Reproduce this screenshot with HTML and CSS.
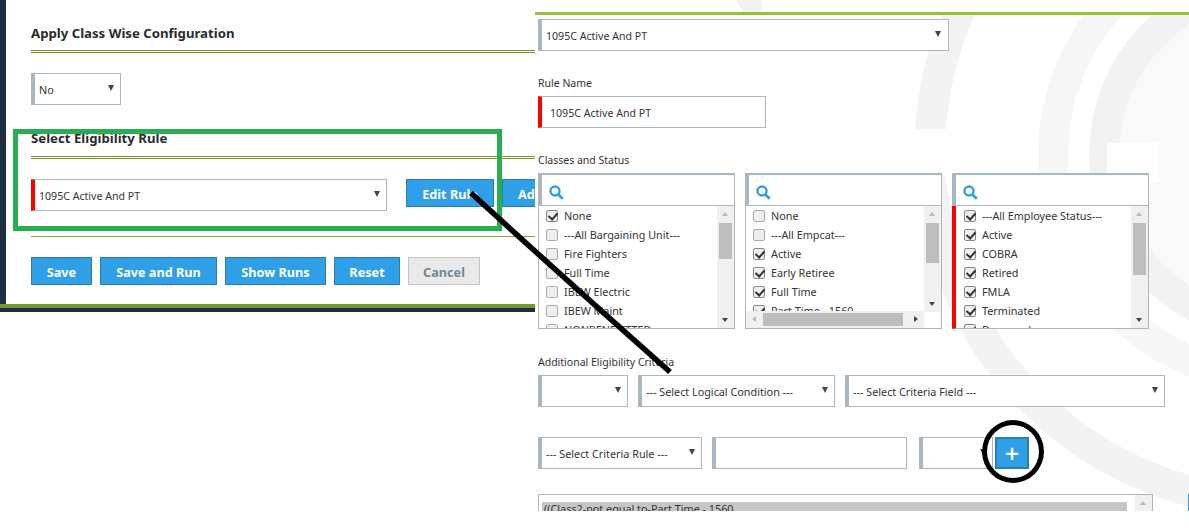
FILE: index.html
```html
<!DOCTYPE html>
<html lang="en">
<head>
<meta charset="utf-8">
<title>Eligibility Rule</title>
<link rel="stylesheet" href="styles.css">
</head>
<body>
<main class="page">
  <section class="left">
    <div class="left-inner">
      <h2 class="heading first">Apply Class Wise Configuration</h2>
      <div class="dbl-line"></div>
      <div class="sel sel-no"><span>No</span><i class="arrow"></i></div>
      <h2 class="heading second">Select Eligibility Rule</h2>
      <div class="dbl-line low"></div>
      <div class="rule-row">
        <div class="sel sel-rule req"><span>1095C Active And PT</span><i class="arrow"></i></div>
        <button class="btn edit">Edit Rule</button>
        <button class="btn add">Add</button>
      </div>
      <div class="single-line"></div>
      <div class="actions">
        <button class="btn save">Save</button>
        <button class="btn run">Save and Run</button>
        <button class="btn show">Show Runs</button>
        <button class="btn reset">Reset</button>
        <button class="btn cancel">Cancel</button>
      </div>
    </div>
    <div class="olive-bar"></div>
  </section>
  <section class="right">
    <svg class="arcs" width="654" height="511" viewBox="535 0 654 511" aria-hidden="true">
      <circle cx="1276" cy="155" r="157" fill="#f9f9f9"/>
      <g fill="none">
        <circle cx="1281" cy="152" r="351" stroke="#f3f3f3" stroke-width="31"/>
        <circle cx="1276" cy="155" r="223" stroke="#f6f6f6" stroke-width="30"/>
        <circle cx="1276" cy="155" r="172" stroke="#f2f2f2" stroke-width="30"/>
      </g>
      <rect class="cut" x="900" y="129" width="60" height="46"/>
      <rect class="cut" x="1107" y="143" width="52" height="40"/>
      <rect class="cut" x="535" y="0" width="654" height="12"/>
      <polygon points="736,0 743,12 761,12 762,0" fill="#f2f2f2"/>
    </svg>
    <div class="right-inner">
      <div class="sel sel-top"><span>1095C Active And PT</span><i class="arrow"></i></div>
      <label class="lbl rule-lbl">Rule Name</label>
      <div class="input name req"><span>1095C Active And PT</span></div>
      <label class="lbl class-lbl">Classes and Status</label>
      <div class="lists">
        <div class="listbox">
          <div class="search"><svg width="15" height="15" viewBox="0 0 15 15"><circle cx="6" cy="6" r="4.5" fill="none" stroke="#2f9fe6" stroke-width="2.4"/><path d="M9.4 9.4l4.4 4.4" stroke="#2f9fe6" stroke-width="2.8"/></svg></div>
          <div class="items">
            <ul class="opts">
              <li><b class="cb on"></b>None</li>
              <li><b class="cb"></b>---All Bargaining Unit---</li>
              <li><b class="cb"></b>Fire Fighters</li>
              <li><b class="cb"></b>Full Time</li>
              <li><b class="cb"></b>IBEW Electric</li>
              <li><b class="cb"></b>IBEW Maint</li>
              <li><b class="cb"></b>NONBENEFITTED</li>
            </ul>
            <div class="vbar"><i class="up"></i><i class="thumb t1"></i><i class="down"></i></div>
          </div>
        </div>
        <div class="listbox">
          <div class="search"><svg width="15" height="15" viewBox="0 0 15 15"><circle cx="6" cy="6" r="4.5" fill="none" stroke="#2f9fe6" stroke-width="2.4"/><path d="M9.4 9.4l4.4 4.4" stroke="#2f9fe6" stroke-width="2.8"/></svg></div>
          <div class="items with-h">
            <ul class="opts">
              <li><b class="cb"></b>None</li>
              <li><b class="cb"></b>---All Empcat---</li>
              <li><b class="cb on"></b>Active</li>
              <li><b class="cb on"></b>Early Retiree</li>
              <li><b class="cb on"></b>Full Time</li>
              <li><b class="cb on"></b>Part Time - 1560</li>
            </ul>
            <div class="vbar short"><i class="up"></i><i class="thumb t2"></i><i class="down"></i></div>
            <div class="hbar"><i class="left-a"></i><i class="hthumb"></i><i class="right-a"></i></div>
          </div>
        </div>
        <div class="listbox red">
          <div class="search"><svg width="15" height="15" viewBox="0 0 15 15"><circle cx="6" cy="6" r="4.5" fill="none" stroke="#2f9fe6" stroke-width="2.4"/><path d="M9.4 9.4l4.4 4.4" stroke="#2f9fe6" stroke-width="2.8"/></svg></div>
          <div class="items">
            <ul class="opts">
              <li><b class="cb on"></b>---All Employee Status---</li>
              <li><b class="cb on"></b>Active</li>
              <li><b class="cb on"></b>COBRA</li>
              <li><b class="cb on"></b>Retired</li>
              <li><b class="cb on"></b>FMLA</li>
              <li><b class="cb on"></b>Terminated</li>
              <li><b class="cb on"></b>Deceased</li>
            </ul>
            <div class="vbar"><i class="up"></i><i class="thumb t3"></i><i class="down"></i></div>
          </div>
        </div>
      </div>
      <label class="lbl add-lbl">Additional Eligibility Criteria</label>
      <div class="crit-row one">
        <div class="sel c1"><span></span><i class="arrow"></i></div>
        <div class="sel c2"><span>--- Select Logical Condition ---</span><i class="arrow"></i></div>
        <div class="sel c3"><span>--- Select Criteria Field ---</span><i class="arrow"></i></div>
      </div>
      <div class="crit-row two">
        <div class="sel c4"><span>--- Select Criteria Rule ---</span><i class="arrow"></i></div>
        <div class="input c5"></div>
        <div class="sel c6"><i class="arrow"></i></div>
        <button class="btn plus">+</button>
      </div>
      <div class="expr">
        <div class="expr-line">((Class2-not equal to-Part Time - 1560</div>
        <div class="expr-bar"><i class="up"></i></div>
      </div>
    </div>
    <div class="edge"></div>
  </section>
  <div class="green-box"></div>
  <svg class="pointer" width="230" height="200" viewBox="0 0 230 200" aria-hidden="true"><path d="M2 2 C60 55 130 118 201 181" fill="none" stroke="#000" stroke-width="5.5"/></svg>
  <div class="ring"></div>
</main>
</body>
</html>
```
FILE: styles.css
```css
* { box-sizing: border-box; }
html, body { margin: 0; padding: 0; background: #fff; }
body { font-family: "Noto Sans", sans-serif; color: #333; }
.page { position: relative; display: flex; align-items: flex-start; width: 1189px; height: 511px; overflow: hidden; }

.left { width: 535px; height: 312px; border-bottom: 4px solid #1c2e40; }
.left-inner { height: 304px; padding-left: 25px; border-left: 6px solid #1c2e40; }
.olive-bar { height: 4px; background: #76962e; }
.heading { margin: 0; font: bold 13.2px/16px "Noto Sans", sans-serif; color: #2b2b2b; }
.heading.first { padding-top: 25px; }
.heading.second { padding-top: 25px; }
.dbl-line { height: 3px; margin-top: 9px; border-top: 1px solid #7a9a22; border-bottom: 1px solid #7a9a22; }
.dbl-line.low { margin-top: 10px; }
.single-line { height: 1px; margin-top: 25px; background: #86a32c; }

.sel, .input { position: relative; display: flex; align-items: center; height: 32px; background: #fff; border: 1px solid #a9b8c0; border-left: 4px solid #a9b8c0; color: #333; padding: 2px 0 0 4px; }
.sel span, .input span { font: 10.8px/14px "Noto Sans", sans-serif; white-space: nowrap; }
.sel-top span, .sel-rule span, .name span { font-size: 10.6px; }
.arrow { position: absolute; right: 6px; top: 11px; width: 0; height: 0; border-left: 3.5px solid transparent; border-right: 3.5px solid transparent; border-top: 6px solid #444; }
.req { border-left-color: #f00; }
.sel-no { width: 90px; margin-top: 20px; }
.rule-row { display: flex; margin-top: 20px; width: 504px; overflow: hidden; }
.sel-rule { width: 356px; flex: none; }
.btn { flex: none; height: 28px; padding: 2px 0 0; background: #2fa0e8; border: 1px solid #2d7ea8; color: #fff; font: bold 12.7px/14px "Noto Sans", sans-serif; }
.edit { width: 88px; margin-left: 19px; }
.add { width: 40px; margin-left: 8px; text-align: left; padding-left: 15px; }
.actions { display: flex; gap: 8px; margin-top: 20px; }
.save { width: 61px; }
.run { width: 117px; }
.show { width: 101px; }
.reset { width: 66px; }
.cancel { width: 72px; background: #e9e9e9; border-color: #c5c5c5; color: #6e8a9b; }

.right { position: relative; width: 654px; height: 511px; padding-top: 12px; }
.arcs { position: absolute; left: 0; top: 0; }
.cut { fill: #fff; }
.right-inner { position: relative; height: 499px; border-top: 3px solid #9bbf3b; padding: 4px 0 0 3px; }
.sel-top { width: 411px; }
.sel-top .arrow { right: 7px; }
.lbl { display: block; font: 10.5px/14px "Noto Sans", sans-serif; color: #333; }
.rule-lbl { margin-top: 25px; }
.name { width: 228px; margin-top: 6px; padding-left: 8px; }
.class-lbl { margin-top: 25px; }
.lists { display: flex; gap: 10px; margin-top: 6px; }
.listbox { width: 197px; height: 156px; }
.search { height: 33px; border: 1px solid #a9b8c0; border-top-width: 2px; border-left-width: 4px; background: #fff; padding: 8px 0 0 7px; }
.items { position: relative; display: flex; height: 123px; border: 1px solid #a9b8c0; border-top: 0; background: #fff; overflow: hidden; }
.listbox.red .items { border-left: 4px solid #f00; }
.opts { flex: 1; margin: 0; padding: 0; list-style: none; font: 10.8px/19px "Noto Sans", sans-serif; color: #333; }
.opts li { display: flex; align-items: center; height: 19px; padding-left: 7px; white-space: nowrap; }
.listbox.red .opts li { padding-left: 8px; }
.cb { flex: none; width: 12px; height: 12px; margin-right: 6px; border: 1px solid #aaa; border-radius: 2px; background: #eee; }
.cb.on { position: relative; border-color: #888; }
.cb.on::after { content: ""; position: absolute; left: 3px; top: 0; width: 4px; height: 7px; border: solid #333; border-width: 0 2px 2px 0; transform: rotate(42deg); }
.vbar { position: relative; flex: none; width: 17px; height: 122px; background: #f0f0f0; }
.vbar.short { height: 106px; }
.thumb { position: absolute; left: 2px; width: 13px; background: #bdbdbd; }
.t1 { top: 17px; height: 36px; }
.t2 { top: 17px; height: 40px; }
.t3 { top: 17px; height: 52px; }
.up, .down { position: absolute; left: 5px; width: 0; height: 0; border-left: 3.5px solid transparent; border-right: 3.5px solid transparent; }
.up { top: 6px; border-bottom: 4px solid #bbb; }
.down { bottom: 6px; border-top: 4px solid #444; }
.hbar { position: absolute; left: 0; right: 17px; bottom: 0; height: 17px; background: #f0f0f0; }
.with-h .vbar { position: absolute; right: 0; top: 0; }
.hthumb { position: absolute; left: 17px; top: 2px; width: 140px; height: 13px; background: #bdbdbd; }
.left-a, .right-a { position: absolute; top: 5px; width: 0; height: 0; border-top: 3.5px solid transparent; border-bottom: 3.5px solid transparent; }
.left-a { left: 6px; border-right: 4px solid #bbb; }
.right-a { right: 6px; border-left: 4px solid #444; }

.add-lbl { margin-top: 26px; }
.crit-row { display: flex; gap: 10px; }
.crit-row.one { margin-top: 6px; }
.crit-row.two { margin-top: 30px; position: relative; }
.c1 { width: 90px; }
.c2 { width: 197px; }
.c3 { width: 320px; }
.c4 { width: 164px; }
.c5 { width: 195px; }
.c6 { width: 74px; margin-left: 2px; }
.plus { position: absolute; left: 457px; top: 0; width: 34px; height: 32px; padding: 0; font: bold 19px/26px "DejaVu Sans", sans-serif; border-width: 2px; }
.expr { position: relative; width: 615px; height: 30px; margin-top: 25px; border: 1px solid #a9b8c0; background: #fff; padding: 7px 0 0 3px; overflow: hidden; }
.expr-line { width: 585px; height: 20px; background: #c6c6c6; font: 10.8px/14px "Noto Sans", sans-serif; padding-left: 2px; }
.expr-bar { position: absolute; right: 0; top: 0; width: 17px; height: 30px; background: #f0f0f0; }
.edge { position: absolute; right: 0; top: 494px; width: 1px; height: 17px; background: #2fa0e8; }

.green-box { position: absolute; left: 13px; top: 129px; width: 489px; height: 102px; border: 5px solid #27ae50; }
.pointer { position: absolute; left: 469px; top: 191px; }
.ring { position: absolute; left: 982px; top: 420px; width: 62px; height: 63px; border: 5px solid #000; border-radius: 50%; }
```
